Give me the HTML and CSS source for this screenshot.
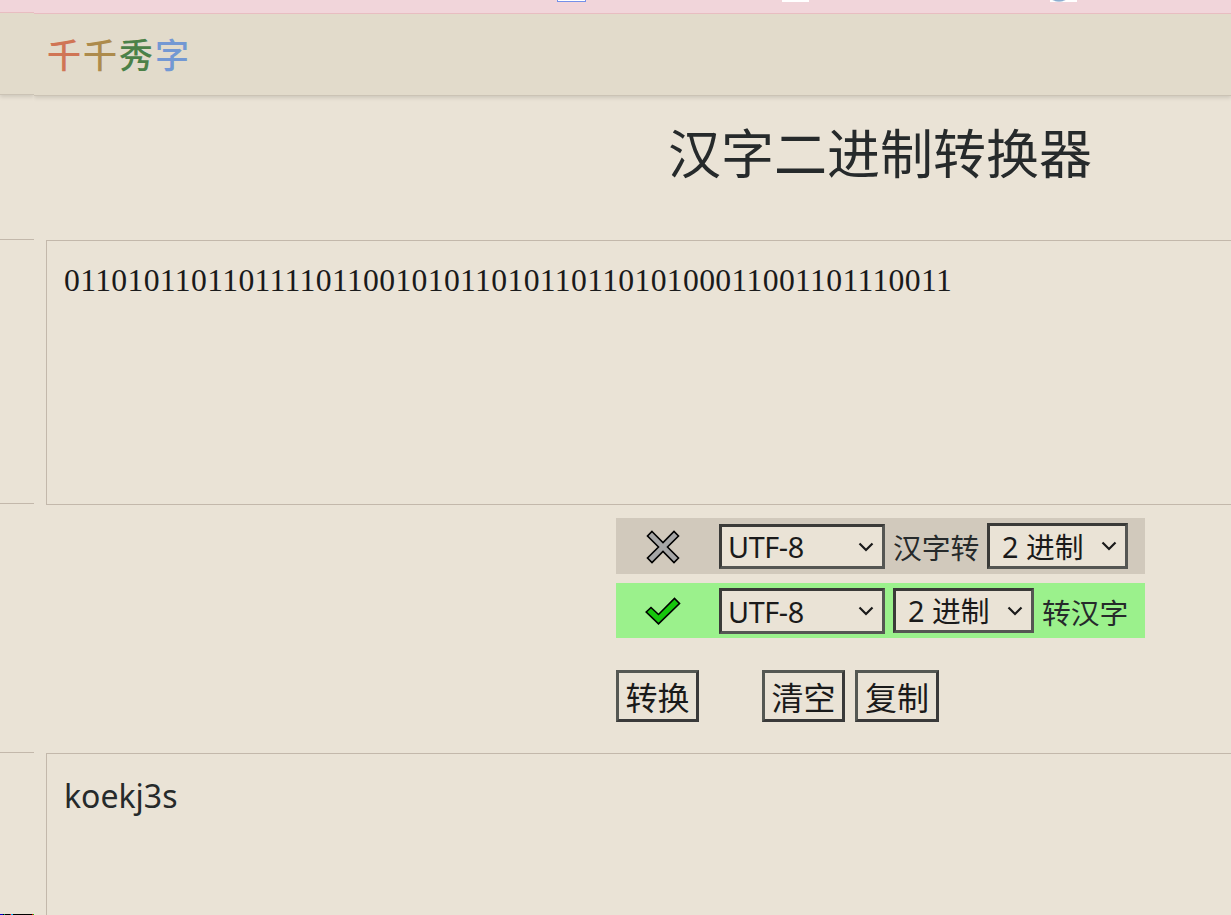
FILE: index.html
```
<!DOCTYPE html>
<html lang="zh-CN">
<head>
    <meta charset="UTF-8">
    <title>汉字二进制转换器</title>
    <link rel="stylesheet" href="styles.css">
</head>
<body>

    <div class="side">
        <div class="sideBar"></div>
        <div class="sideHeader"></div>
        <div class="sideBox"></div>
        <div class="sideBox sideResult"></div>
    </div>

    <div class="page">
        <div class="topBar">
            <span class="tab tabBlue"></span>
            <span class="tab tabWhite"></span>
            <span class="tab tabRound"></span>
        </div>

        <div class="header">
            <div class="logo"><span class="red">千</span><span class="gold">千</span><span class="green">秀</span><span class="blue">字</span></div>
        </div>

        <div class="content">
            <h1>汉字二进制转换器</h1>

            <textarea id="inputText" class="inputBox" spellcheck="false">01101011011011110110010101101011011010100011001101110011</textarea>

            <div class="controls">
                <div class="option">
                    <svg class="mark" width="34" height="34" viewBox="0 0 34 34">
                        <path d="M6 1.5 L17 12.5 L28 1.5 L32.5 6 L21.5 17 L32.5 28 L28 32.5 L17 21.5 L6 32.5 L1.5 28 L12.5 17 L1.5 6 Z" fill="#a6a6a6" stroke="#000" stroke-width="1.6"/>
                    </svg>
                    <div class="pick charset">
                        <select><option>UTF-8</option></select>
                        <svg class="arrow" width="16" height="10" viewBox="0 0 16 10"><path d="M1.5 1.5 L8 8 L14.5 1.5"/></svg>
                    </div>
                    <span class="label">汉字转</span>
                    <div class="pick base tall">
                        <select><option>2 进制</option></select>
                        <svg class="arrow" width="16" height="10" viewBox="0 0 16 10"><path d="M1.5 1.5 L8 8 L14.5 1.5"/></svg>
                    </div>
                </div>

                <div class="option active">
                    <svg class="mark" width="36" height="28" viewBox="0 0 36 28">
                        <path d="M1.2 15 L6 10.5 L13.5 17.5 L29.5 1.5 L34.5 6.5 L13.5 26.8 Z" fill="#16c60c" stroke="#000" stroke-width="1.6"/>
                    </svg>
                    <div class="pick charset tall">
                        <select><option>UTF-8</option></select>
                        <svg class="arrow" width="16" height="10" viewBox="0 0 16 10"><path d="M1.5 1.5 L8 8 L14.5 1.5"/></svg>
                    </div>
                    <div class="pick base">
                        <select><option>2 进制</option></select>
                        <svg class="arrow" width="16" height="10" viewBox="0 0 16 10"><path d="M1.5 1.5 L8 8 L14.5 1.5"/></svg>
                    </div>
                    <span class="label">转汉字</span>
                </div>

                <div class="buttons">
                    <button class="convert">转换</button>
                    <button>清空</button>
                    <button>复制</button>
                </div>
            </div>

            <div class="resultBox">koekj3s</div>
        </div>
    </div>

</body>
</html>
```
FILE: styles.css
```
* {
    box-sizing: border-box;
}

body {
    margin: 0;
    height: 915px;
    display: flex;
    overflow: hidden;
    background-color: #eae3d6;
    color: #262a2b;
    font-family: "Noto Sans", "Noto Sans CJK SC", sans-serif;
}

/* narrow column on the left edge */
.side {
    flex: none;
    width: 34px;
    height: 915px;
    display: flex;
    flex-direction: column;
    border-bottom: 1px solid #000;
    border-image: linear-gradient(to right, #00c 0 4px, #000 4px 5px, #0a5 5px 6px, #000 6px 10px, #e00 10px 11px, #0bf 11px 13px, #000 13px 31px, #e00 31px 32px, #0c0 32px 33px, #03f 33px) 1;
    border-image-width: 0 0 1px 0;
}

.sideBar {
    height: 13px;
    background-color: #f1d5da;
    border-bottom: 1px solid #e8bdc1;
}

.sideHeader {
    height: 82px;
    background-color: #e2dbcb;
    border-bottom: 1px solid #cbc3b5;
    box-shadow: 0 2px 4px rgba(0, 0, 0, 0.12);
    clip-path: inset(0 0 -8px 0);
}

.sideBox {
    height: 265px;
    margin-top: 144px;
    border-top: 1px solid #c3b8ab;
    border-bottom: 1px solid #c3b8ab;
}

.sideResult {
    flex: 1;
    margin-top: 248px;
    border-bottom: none;
}

.page {
    flex: 1;
    min-width: 0;
}

.topBar {
    height: 14px;
    padding-left: 523px;
    display: flex;
    background-color: #f1d5da;
    border-bottom: 1px solid #e8bdc1;
}

.tab {
    width: 27px;
    height: 2px;
    background-color: #fff;
}

.tabBlue {
    width: 29px;
    margin-right: 196px;
    border: 1px solid #7590e8;
    border-top: none;
}

.tabWhite {
    margin-right: 241px;
}

.tabRound {
    background-image: radial-gradient(ellipse 7px 2px at 9px 0, #8caed0 60%, #fff);
}

.header {
    height: 82px;
    padding: 21px 0 0 13px;
    background-color: #e2dbcb;
    border-bottom: 1px solid #cbc3b5;
    box-shadow: 0 2px 4px rgba(0, 0, 0, 0.12);
    clip-path: inset(0 0 -8px 0);
}

.logo {
    font-family: "Noto Sans CJK SC", sans-serif;
    font-size: 34px;
    font-weight: 500;
    letter-spacing: 2px;
    line-height: 38px;
}

.red {
    color: #d07555;
}

.gold {
    color: #ad8b4c;
}

.green {
    color: #4b8148;
}

.blue {
    color: #7398d3;
}

.content {
    padding-left: 12px;
}

h1 {
    margin: 0 0 0 622px;
    height: 144px;
    line-height: 111px;
    font-size: 53px;
    font-weight: 400;
    font-family: "Noto Sans CJK SC", sans-serif;
}

.inputBox {
    display: block;
    width: 100%;
    height: 265px;
    padding: 18px 17px;
    border: 1px solid #c3b8ab;
    border-right: none;
    border-radius: 0;
    outline: none;
    resize: none;
    overflow: hidden;
    background-color: transparent;
    color: #1a1a1a;
    font-family: "Liberation Serif", serif;
    font-size: 31.7px;
    line-height: 44px;
    letter-spacing: 0.33px;
}

.controls {
    width: 529px;
    height: 248px;
    margin-left: 570px;
    padding-top: 13px;
}

.option {
    height: 56px;
    display: flex;
    padding: 5px 0 0 29px;
    background-color: #d1c9bc;
}

.option.active {
    height: 55px;
    margin-top: 9px;
    background-color: #9bf18c;
}

.mark {
    flex: none;
    width: 36px;
    margin: 7px 38px 0 0;
}

.active .mark {
    margin-top: 9px;
}

.pick {
    position: relative;
    height: 45px;
}

.pick select {
    width: 100%;
    height: 100%;
    padding: 0 0 0 6px;
    border: 3px solid;
    border-color: #3a3a38 #555653 #555653 #3a3a38;
    border-radius: 0;
    appearance: none;
    background-color: #eae3d6;
    color: #1a1a1a;
    font-family: "Noto Sans", "Noto Sans CJK SC", sans-serif;
    font-size: 28.8px;
}

.charset {
    width: 166px;
    margin-right: 8px;
}

.charset select {
    letter-spacing: -0.4px;
}

.option:not(.active) .charset {
    margin-top: 1px;
}

.tall {
    height: 46px;
}

.base {
    width: 141px;
}

.base select {
    padding-left: 12px;
}

.arrow {
    position: absolute;
    right: 11px;
    top: 18px;
    fill: none;
    stroke: #1a1a1a;
    stroke-width: 2.2;
    pointer-events: none;
}

.label {
    width: 86px;
    font-size: 28.8px;
    line-height: 49px;
    white-space: nowrap;
}

.option:not(.active) .label {
    margin-right: 8px;
}

.active .label {
    margin-left: 8px;
}

.buttons {
    display: flex;
    margin-top: 32px;
}

button {
    width: 83px;
    height: 52px;
    margin-right: 10px;
    padding: 0;
    border: 3px solid;
    border-color: #555853 #3a3a3a #3a3a3a #555853;
    background-color: #eae3d6;
    color: #1a1a1a;
    font-family: "Noto Sans CJK SC", sans-serif;
    font-size: 32px;
}

button.convert {
    margin-right: 63px;
}

button:last-child {
    width: 84px;
    margin-right: 0;
}

.resultBox {
    height: 162px;
    padding: 20px 17px;
    border: 1px solid #c3b8ab;
    border-right: none;
    border-bottom: none;
    font-size: 32px;
    line-height: 44px;
}
```
